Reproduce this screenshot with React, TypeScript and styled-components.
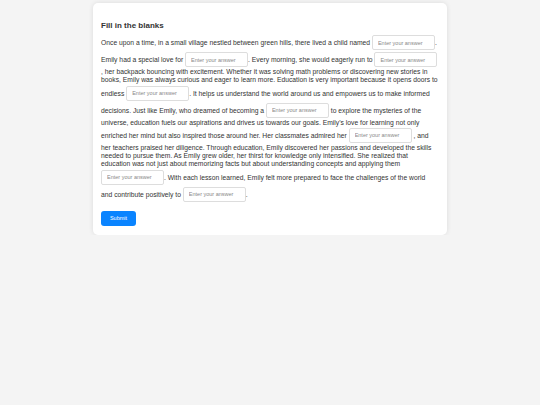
import React from "react";
import styled, { createGlobalStyle } from "styled-components";

const Global = createGlobalStyle`
  html, body {
    margin: 0;
    padding: 0;
    background: #f4f4f4;
    font-family: "Liberation Sans", Arial, sans-serif;
  }
`;

const Card = styled.div`
  width: 354px;
  margin: 3px auto 0;
  box-sizing: border-box;
  background: #fff;
  border-radius: 5px;
  box-shadow: 0 0 5px rgba(0, 0, 0, 0.1);
  padding: 18px 8px 9px;
`;

const Title = styled.h2`
  margin: 0 0 4px;
  font-size: 8px;
  line-height: 9px;
  font-weight: bold;
  color: #333;
`;

const Story = styled.p`
  margin: 0;
  font-size: 6.75px;
  line-height: 8.3px;
  color: #333;
`;

const Blank = styled.input`
  width: 63px;
  height: 15px;
  box-sizing: border-box;
  margin: 1px 0;
  padding: 0 5px;
  border: 1px solid #ddd;
  border-radius: 2px;
  font-family: "Liberation Sans", Arial, sans-serif;
  font-size: 5.5px;
  color: #333;
  outline: none;
  &::placeholder {
    color: #888;
  }
`;

const SubmitButton = styled.button`
  margin-top: 8px;
  width: 35px;
  height: 15px;
  padding: 0;
  border: none;
  border-radius: 3px;
  background: #0a84ff;
  color: #fff;
  font-family: "Liberation Sans", Arial, sans-serif;
  font-size: 5.5px;
  cursor: pointer;
`;

const parts = [
  "Once upon a time, in a small village nestled between green hills, there lived a child named ",
  ". Emily had a special love for ",
  ". Every morning, she would eagerly run to ",
  " , her backpack bouncing with excitement. Whether it was solving math problems or discovering new stories in books, Emily was always curious and eager to learn more. Education is very important because it opens doors to endless ",
  ". It helps us understand the world around us and empowers us to make informed decisions. Just like Emily, who dreamed of becoming a ",
  " to explore the mysteries of the universe, education fuels our aspirations and drives us towards our goals. Emily's love for learning not only enriched her mind but also inspired those around her. Her classmates admired her ",
  " , and her\u00a0teachers praised her diligence. Through education, Emily discovered her passions and developed the skills needed to pursue them. As Emily grew older, her thirst for knowledge only intensified. She realized that education was not just about memorizing facts but about understanding concepts and applying them ",
  ". With each lesson learned, Emily felt more prepared to face the challenges of the world and\u00a0contribute positively to ",
  ".",
];

export default function App() {
  return (
    <>
      <Global />
      <Card>
        <Title>Fill in the blanks</Title>
        <Story>
          {parts.map((text, i) => (
            <React.Fragment key={i}>
              {text}
              {i < parts.length - 1 && <Blank placeholder="Enter your answer" />}
            </React.Fragment>
          ))}
        </Story>
        <SubmitButton>Submit</SubmitButton>
      </Card>
    </>
  );
}
